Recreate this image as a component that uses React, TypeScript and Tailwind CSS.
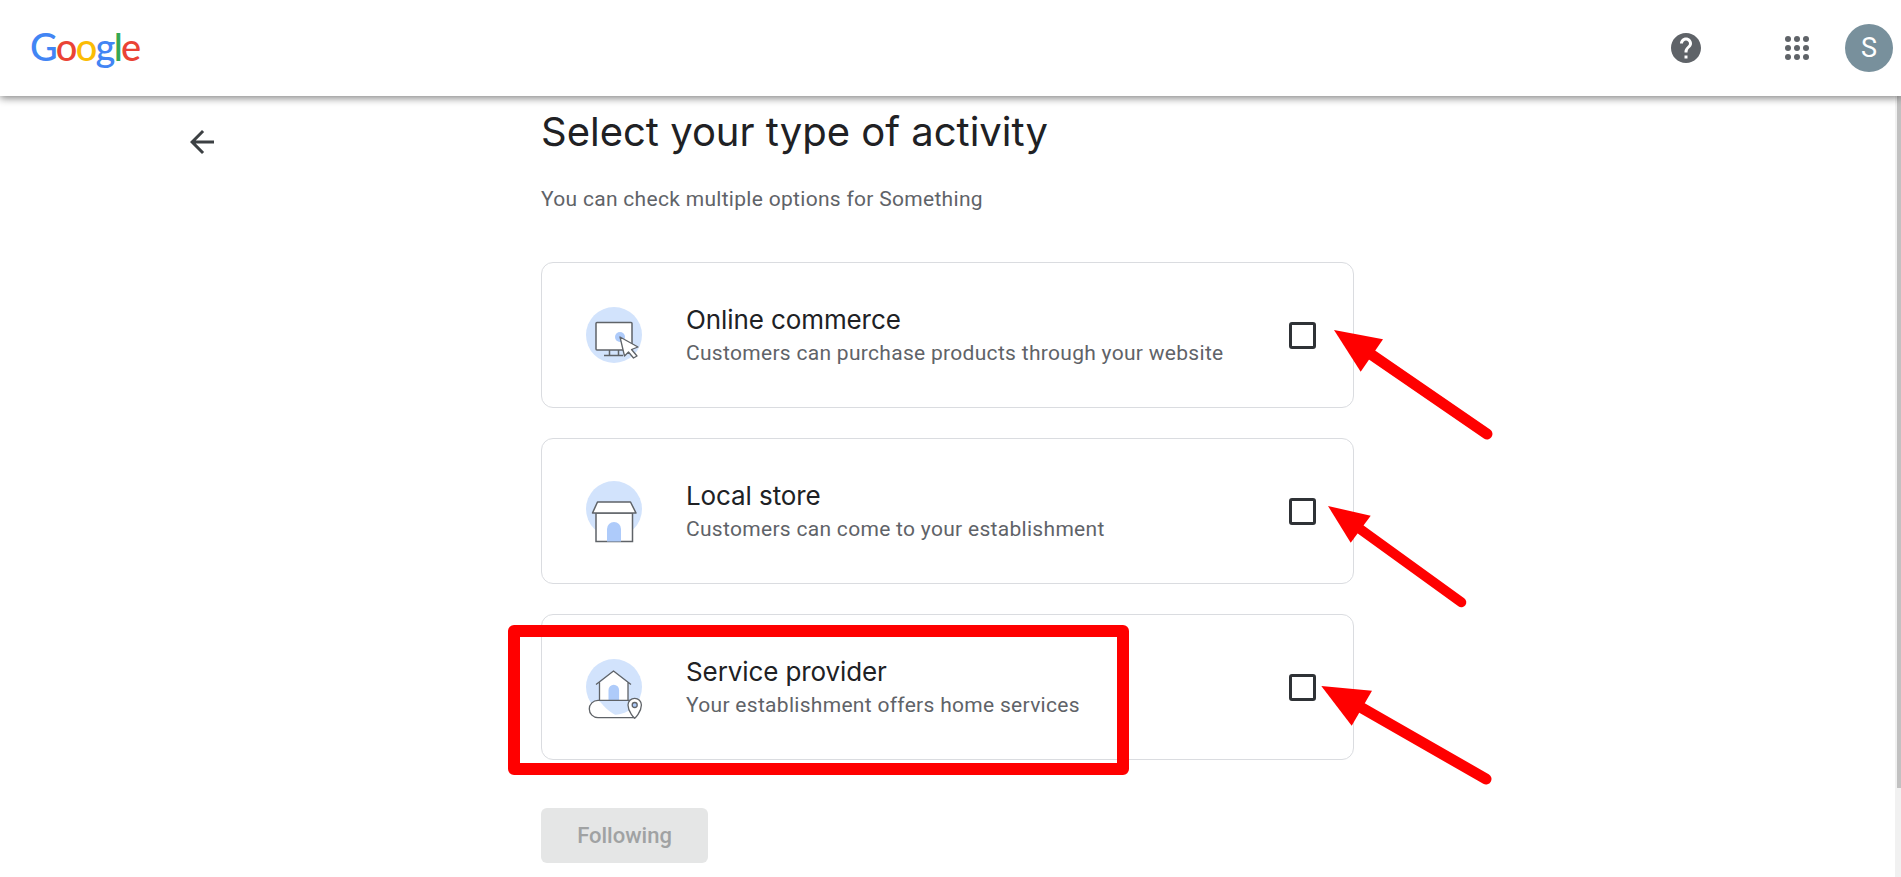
import React from "react";

const roboto = { fontFamily: "Roboto, sans-serif" };

// Blue disc shared by the three activity illustrations
const Disc = ({ cy = 40 }: { cy?: number }) => <circle cx="40" cy={cy} r="28" fill="#d2e3fc" stroke="none" />;

const OnlineIcon = () => (
  <svg width="80" height="80" viewBox="0 0 80 80" fill="none" stroke="#5f6368" strokeWidth="1.5">
    <Disc />
    <rect x="22" y="27.5" width="36" height="27.5" rx="1" fill="#fff" />
    <path d="M35.500 55v5M44.500 55v5M30 60.500h19" />
    <circle cx="46" cy="42" r="5" fill="#aecbfa" stroke="none" />
    <path d="M46 42l18 10-6.500 2.500 5.500 6.500-3.500 2-5-6-4 4z" fill="#fff" strokeWidth="1.3" strokeLinejoin="round" />
  </svg>
);

const StoreIcon = () => (
  <svg width="80" height="80" viewBox="0 0 80 80" fill="none" stroke="#5f6368" strokeWidth="1.5">
    <Disc cy={38} />
    <rect x="22" y="42" width="36.500" height="28.500" fill="#fff" />
    <path d="M23.500 31h33l5.500 11H18.500z" fill="#fff" strokeLinejoin="round" />
    <path d="M33 70.500V58a7 7 0 0 1 14 0v12.500z" fill="#aecbfa" stroke="none" />
  </svg>
);

const ServiceIcon = () => (
  <svg width="80" height="80" viewBox="0 0 80 80" fill="none" stroke="#5f6368" strokeWidth="1.3">
    <Disc />
    <path d="M25.500 53.500V36L39.500 24.500 54 36v17.500z" fill="#fff" stroke="none" />
    <path d="M22 37.500L39.500 24 57 37.500M25.500 35.500V53.500M54 35.500V53.500" strokeLinejoin="round" />
    <path d="M34.500 53.500V43a5.300 5.300 0 0 1 10.600 0v10.500z" fill="#aecbfa" stroke="none" />
    <path d="M24 70.700a8.700 8.700 0 0 1 0-17.400c5 3 8 12 24 17.400z" fill="#fff" stroke="none" />
    <path d="M24 53.300h34M60 70.700H24a8.700 8.700 0 0 1 0-17.400" />
    <path d="M60.700 71.300C60.700 71.300 54 65 54 58a6.700 6.700 0 0 1 13.400 0c0 7-6.700 13.300-6.700 13.300z" fill="#fff" strokeLinejoin="round" />
    <circle cx="60.700" cy="58" r="2.500" fill="#aecbfa" />
  </svg>
);

const activities = [
  { title: "Online commerce", text: "Customers can purchase products through your website", icon: <OnlineIcon /> },
  { title: "Local store", text: "Customers can come to your establishment", icon: <StoreIcon /> },
  { title: "Service provider", text: "Your establishment offers home services", icon: <ServiceIcon /> },
];

const App = () => {
  return (
    <div className="relative h-screen flex flex-col overflow-hidden bg-white" style={roboto}>
      {/* Top bar */}
      <header className="relative z-10 h-24 shrink-0 flex items-center bg-white shadow-[0_2px_8px_rgba(0,0,0,0.5)] pl-[30px] pr-2">
        <div className="text-[38px] leading-none font-['Lato',sans-serif] font-medium tracking-[-1.700px] -mt-1">
          <span className="text-[#4285f4]">G</span>
          <span className="text-[#ea4335]">o</span>
          <span className="text-[#fbbc05]">o</span>
          <span className="text-[#4285f4]">g</span>
          <span className="text-[#34a853]">l</span>
          <span className="text-[#ea4335]">e</span>
        </div>
        <div className="ml-auto flex items-center">
          <svg width="36" height="36" viewBox="0 0 24 24" fill="#5f6368">
            <path d="M12 2C6.480 2 2 6.480 2 12s4.480 10 10 10 10-4.480 10-10S17.520 2 12 2zm1 17h-2v-2h2v2zm2.070-7.750l-.900.920C13.450 12.900 13 13.500 13 15h-2v-.500c0-1.100.450-2.100 1.170-2.830l1.240-1.260c.370-.360.590-.860.590-1.410 0-1.100-.900-2-2-2s-2 .900-2 2H8c0-2.210 1.790-4 4-4s4 1.790 4 4c0 .880-.360 1.680-.930 2.250z" />
          </svg>
          <svg className="ml-[81px]" width="24" height="24" viewBox="0 0 24 24" fill="#5f6368">
            {[3, 12, 21].map((y) =>
              [3, 12, 21].map((x) => <circle key={`${x}-${y}`} cx={x} cy={y} r="3" />)
            )}
          </svg>
          <div className="ml-9 w-12 h-12 rounded-full bg-[#78909c] text-white text-[27px] flex items-center justify-center">
            S
          </div>
        </div>
      </header>

      <div className="flex-1 flex min-h-0">
        <main className="flex-1 min-w-0 flex pl-[184px]">
          {/* Back arrow */}
          <svg className="mt-[28px] shrink-0" width="36" height="36" viewBox="0 0 24 24" fill="#3c4043">
            <path d="M20 11H7.830l5.590-5.590L12 4l-8 8 8 8 1.410-1.410L7.830 13H20v-2z" />
          </svg>

          <div className="ml-[321px] w-[813px]">
            <h1 className="mt-[10px] text-[40px] leading-[52px] text-[#202124] font-normal font-['Inter',sans-serif]">
              Select your type of activity
            </h1>
            <p className="mt-[27px] text-[21px] leading-[28px] text-[#5f6368] tracking-[0.3px]">
              You can check multiple options for Something
            </p>

            {/* Activity cards */}
            <div className="mt-[49px] flex flex-col gap-[30px]">
              {activities.map((item) => (
                <div
                  key={item.title}
                  className="h-[146px] flex items-center border border-[#dadce0] rounded-xl pl-8 pr-[37px]"
                >
                  {item.icon}
                  <div className="ml-8 flex-1 mt-[1px]">
                    <div className="text-[26px] leading-[32px] text-[#202124] font-['Inter',sans-serif] tracking-[-0.1px]">
                      {item.title}
                    </div>
                    <div className="mt-[3px] text-[21px] leading-[28px] text-[#5f6368] tracking-[0.3px]">
                      {item.text}
                    </div>
                  </div>
                  <div className="w-[27px] h-[27px] border-[3px] border-[#2f3236] rounded-[3px]" />
                </div>
              ))}
            </div>

            <button className="mt-[48px] w-[167px] h-[55px] rounded-md bg-[#e5e6e6] text-[#a0a2a3] text-[22px] font-medium">
              Following
            </button>
          </div>
        </main>

        {/* Scrollbar */}
        <div className="w-[6px] shrink-0 bg-[#f1f1f1] flex justify-end">
          <div className="w-1 h-[692px] bg-[#c1c1c1]" />
        </div>
      </div>

      {/* Red annotations drawn over the page */}
      <div className="absolute left-[508px] top-[625px] w-[621px] h-[150px] border-[12px] border-[#ff0000] rounded-[6px]" />
      <svg className="absolute left-0 top-0 z-20 pointer-events-none" width="1901" height="877" fill="#ff0000" stroke="none">
        <polygon points="1334,330 1383,339.300 1360.700,371.700" />
        <line x1="1372" y1="355" x2="1487" y2="434" stroke="#ff0000" strokeWidth="11" strokeLinecap="round" />
        <polygon points="1328,506 1370.700,515.700 1350.700,542.700" />
        <line x1="1360" y1="529" x2="1461.300" y2="602.300" stroke="#ff0000" strokeWidth="10" strokeLinecap="round" />
        <polygon points="1321.300,686 1372,690.700 1351.700,725.700" />
        <line x1="1362" y1="708" x2="1486" y2="779" stroke="#ff0000" strokeWidth="11" strokeLinecap="round" />
      </svg>
    </div>
  );
};

export default App;
